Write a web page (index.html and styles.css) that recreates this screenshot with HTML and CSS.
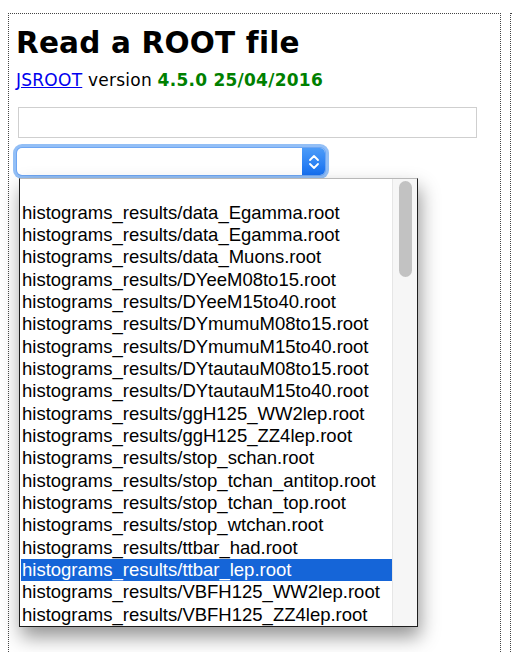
FILE: index.html
```html
<!DOCTYPE html>
<html>
<head>
<meta charset="utf-8">
<title>Read a ROOT file</title>
<link rel="stylesheet" href="styles.css">
</head>
<body>
<div class="page">
  <div class="panel main">
    <h1 class="title">Read a ROOT file</h1>
    <p class="version"><a class="link" href="#">JSROOT</a> version <span class="ver">4.5.0 25/04/2016</span></p>
    <div class="urlbox"></div>
    <div class="select">
      <div class="select-value"></div>
      <div class="select-btn">
        <svg width="12" height="18" viewBox="0 0 12 18" aria-hidden="true">
          <path d="M2 7 L6 3 L10 7" fill="none" stroke="#fff" stroke-width="1.8" stroke-linecap="round" stroke-linejoin="round"/>
          <path d="M2 11 L6 15 L10 11" fill="none" stroke="#fff" stroke-width="1.8" stroke-linecap="round" stroke-linejoin="round"/>
        </svg>
      </div>
    </div>
    <div class="dropdown">
      <div class="options">
        <div class="opt"></div>
        <div class="opt">histograms_results/data_Egamma.root</div>
        <div class="opt">histograms_results/data_Egamma.root</div>
        <div class="opt">histograms_results/data_Muons.root</div>
        <div class="opt">histograms_results/DYeeM08to15.root</div>
        <div class="opt">histograms_results/DYeeM15to40.root</div>
        <div class="opt">histograms_results/DYmumuM08to15.root</div>
        <div class="opt">histograms_results/DYmumuM15to40.root</div>
        <div class="opt">histograms_results/DYtautauM08to15.root</div>
        <div class="opt">histograms_results/DYtautauM15to40.root</div>
        <div class="opt">histograms_results/ggH125_WW2lep.root</div>
        <div class="opt">histograms_results/ggH125_ZZ4lep.root</div>
        <div class="opt">histograms_results/stop_schan.root</div>
        <div class="opt">histograms_results/stop_tchan_antitop.root</div>
        <div class="opt">histograms_results/stop_tchan_top.root</div>
        <div class="opt">histograms_results/stop_wtchan.root</div>
        <div class="opt">histograms_results/ttbar_had.root</div>
        <div class="opt selected">histograms_results/ttbar_lep.root</div>
        <div class="opt">histograms_results/VBFH125_WW2lep.root</div>
        <div class="opt">histograms_results/VBFH125_ZZ4lep.root</div>
      </div>
      <div class="scrollbar"><div class="thumb"></div></div>
    </div>
  </div>
  <div class="panel side"></div>
</div>
</body>
</html>
```

FILE: styles.css
```css
html, body {
  margin: 0;
  padding: 0;
  background: #fff;
  overflow: hidden;
}
.page {
  display: flex;
  gap: 9px;
  padding: 13px 0 0 8px;
  height: 652px;
  width: 512px;
  box-sizing: border-box;
  overflow: hidden;
}
.panel {
  border: 1px dotted #444;
  border-bottom: none;
  height: 638px;
  flex: none;
}
.main {
  position: relative;
  padding-left: 7px;
  width: 484px;
  font-family: "DejaVu Sans", Verdana, sans-serif;
}
.side {
  width: 1px;
  border-right: none;
}
.title {
  margin: 11px 0 0 0;
  font-size: 29.5px;
  line-height: 36px;
  letter-spacing: 0.2px;
  font-weight: bold;
  color: #000;
}
.version {
  margin: 8.5px 0 0 0;
  font-size: 17px;
  line-height: 20px;
  letter-spacing: 0.25px;
  color: #000;
}
.link {
  color: #0000ee;
  text-decoration: underline;
}
.ver {
  color: #008000;
  font-weight: bold;
}
.urlbox {
  margin: 17.7px 0 0 2px;
  width: 457px;
  height: 29px;
  border: 1px solid #cfcfcf;
}
.select {
  margin: 10px 0 0 1px;
  width: 308px;
  height: 27px;
  display: flex;
  border-radius: 5px;
  box-shadow: 0 0 0 1px #6ea6f3, 0 0 0 4px #93bff6;
  background: #fff;
  overflow: hidden;
}
.select-value {
  flex: 1;
}
.select-btn {
  width: 23px;
  display: flex;
  align-items: center;
  justify-content: center;
  background: linear-gradient(#4d9cf8, #1670f1);
}
.dropdown {
  position: absolute;
  left: 10px;
  top: 164px;
  width: 397px;
  height: 447px;
  border: 1px solid #1e1e1e;
  border-top-color: #b8b8b8;
  background: #fff;
  display: flex;
  box-shadow: 2px 10px 18px rgba(0, 0, 0, 0.42);
  overflow: hidden;
  font-family: "Liberation Sans", Arial, Helvetica, sans-serif;
}
.options {
  width: 371px;
  margin-left: 1px;
  padding-top: 0.5px;
}
.opt {
  height: 22.33px;
  line-height: 22.33px;
  font-size: 18.5px;
  padding-left: 1px;
  color: #000;
  white-space: nowrap;
  overflow: hidden;
}
.opt.selected {
  background: #1565d8;
  color: #fff;
}
.scrollbar {
  width: 24px;
  border-left: 1px solid #e6e6e6;
  background: #f6f6f6;
  position: relative;
}
.thumb {
  position: absolute;
  left: 6px;
  top: 2px;
  width: 13px;
  height: 96px;
  border-radius: 7px;
  background: #c2c2c2;
}
```
